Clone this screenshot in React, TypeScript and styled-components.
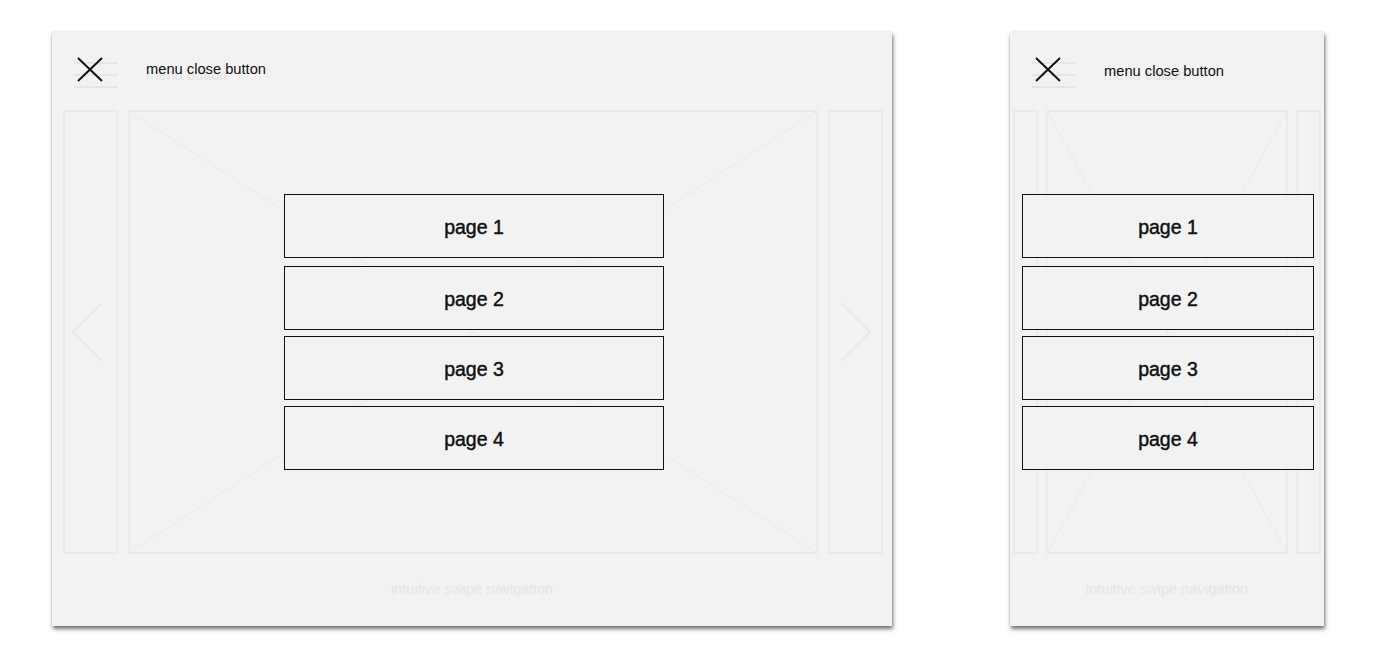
import React from "react";
import styled, { createGlobalStyle } from "styled-components";

const Global = createGlobalStyle`
  html, body { margin: 0; padding: 0; background: #ffffff; }
  body { font-family: "Liberation Sans", Arial, sans-serif; }
`;

const Page = styled.div`
  display: flex;
  align-items: flex-start;
  gap: 118px;
  padding: 32px 0 30px 52px;
`;

const Panel = styled.div<{ $w: number }>`
  width: ${(p) => p.$w}px;
  height: 594px;
  background: #f2f2f2;
  box-shadow: 1px 3px 4px rgba(0, 0, 0, 0.55), 0 0 2px rgba(0, 0, 0, 0.12);
  display: grid;
  grid-template: 1fr / 1fr;
  overflow: hidden;
`;

const Layer = styled.div`
  grid-area: 1 / 1;
  display: flex;
  flex-direction: column;
  min-width: 0;
`;

/* ---------- faded backdrop ---------- */
const GhostHeader = styled.div`
  display: flex;
  align-items: center;
  padding: 30px 0 0 22px;
`;

const Hamburger = styled.div`
  display: flex;
  flex-direction: column;
  gap: 10px;
  width: 44px;
`;

const HamLine = styled.span`
  display: block;
  height: 2px;
  background: #e6e6e6;
`;

const GhostLabel = styled.span`
  margin-left: 28px;
  font-size: 14.7px;
  color: #e3e3e3;
  line-height: 18px;
`;

const Wire = styled.div<{ $padL: number; $padR: number; $gap: number }>`
  display: flex;
  gap: ${(p) => p.$gap}px;
  margin-top: 22px;
  height: 444px;
  padding: 0 ${(p) => p.$padR}px 0 ${(p) => p.$padL}px;
`;

const SideCol = styled.div<{ $w: number }>`
  width: ${(p) => p.$w}px;
  flex: none;
  box-sizing: border-box;
  border: 2px solid #eaeaea;
  display: flex;
  align-items: center;
  justify-content: center;
`;

const MainBox = styled.div`
  flex: 1;
  box-sizing: border-box;
  border: 2px solid #eaeaea;
  display: flex;
`;

const Diag = styled.svg`
  width: 100%;
  height: 100%;
  display: block;
`;

const Caption = styled.div`
  margin-top: 26px;
  text-align: center;
  font-size: 14.7px;
  line-height: 18px;
  color: #e5e5e5;
`;

/* ---------- menu overlay ---------- */
const MenuHeader = styled.div`
  display: flex;
  align-items: center;
  padding: 25px 0 0 25px;
  height: 25px;
`;

const CloseLabel = styled.span<{ $dy: number }>`
  margin-left: 43px;
  font-size: 14.7px;
  line-height: 18px;
  color: #111;
  position: relative;
  top: ${(p) => p.$dy}px;
`;

const MenuList = styled.div<{ $left: number; $w: number }>`
  display: flex;
  flex-direction: column;
  gap: 6px;
  margin: 112px 0 0 ${(p) => p.$left}px;
  width: ${(p) => p.$w}px;
`;

const MenuItem = styled.div`
  box-sizing: border-box;
  height: 64px;
  padding-top: 2px;
  border: 1px solid #111;
  background: #f2f2f2;
  display: flex;
  align-items: center;
  justify-content: center;
  font-size: 19.5px;
  color: #111;
  -webkit-text-stroke: 0.45px #111;
  &:first-child { margin-bottom: 2px; }
`;

const CloseIcon = () => (
  <svg width="26" height="25" viewBox="0 0 26 25" style={{ display: "block" }}>
    <line x1="1" y1="1" x2="25" y2="24" stroke="#111" strokeWidth="2" />
    <line x1="25" y1="1" x2="1" y2="24" stroke="#111" strokeWidth="2" />
  </svg>
);

const Chevron = ({ dir }: { dir: "left" | "right" }) => (
  <svg width="31" height="60" viewBox="0 0 31 60" style={{ display: "block", marginLeft: dir === "left" ? -6 : 0 }}>
    <polyline
      points={dir === "left" ? "30,1 1,30 30,59" : "1,1 30,30 1,59"}
      fill="none"
      stroke="#e6e6e6"
      strokeWidth="1.5"
    />
  </svg>
);

type Cfg = {
  w: number;
  padL: number;
  padR: number;
  gap: number;
  side: number;
  chevrons: boolean;
  listLeft: number;
  listW: number;
  dy: number;
};

const Screen = ({ c }: { c: Cfg }) => (
  <Panel $w={c.w}>
    <Layer>
      <GhostHeader>
        <Hamburger>
          <HamLine />
          <HamLine />
          <HamLine />
        </Hamburger>
        <GhostLabel>menu button</GhostLabel>
      </GhostHeader>
      <Wire $padL={c.padL} $padR={c.padR} $gap={c.gap}>
        <SideCol $w={c.side}>{c.chevrons && <Chevron dir="left" />}</SideCol>
        <MainBox>
          <Diag viewBox="0 0 100 100" preserveAspectRatio="none">
            <line x1="0" y1="0" x2="100" y2="100" stroke="#e8e8e8" strokeWidth="1" vectorEffect="non-scaling-stroke" />
            <line x1="100" y1="0" x2="0" y2="100" stroke="#e8e8e8" strokeWidth="1" vectorEffect="non-scaling-stroke" />
          </Diag>
        </MainBox>
        <SideCol $w={c.side}>{c.chevrons && <Chevron dir="right" />}</SideCol>
      </Wire>
      <Caption>intuitive swipe navigation</Caption>
    </Layer>
    <Layer>
      <MenuHeader>
        <CloseIcon />
        <CloseLabel $dy={c.dy}>menu close button</CloseLabel>
      </MenuHeader>
      <MenuList $left={c.listLeft} $w={c.listW}>
        {["page 1", "page 2", "page 3", "page 4"].map((t) => (
          <MenuItem key={t}>{t}</MenuItem>
        ))}
      </MenuList>
    </Layer>
  </Panel>
);

const desktop: Cfg = { w: 840, padL: 11, padR: 9, gap: 10, side: 55, chevrons: true, listLeft: 232, listW: 380, dy: -0.5 };
const mobile: Cfg = { w: 314, padL: 3, padR: 3, gap: 8, side: 25, chevrons: false, listLeft: 12, listW: 292, dy: 1.5 };

export default function App() {
  return (
    <>
      <Global />
      <Page>
        <Screen c={desktop} />
        <Screen c={mobile} />
      </Page>
    </>
  );
}
